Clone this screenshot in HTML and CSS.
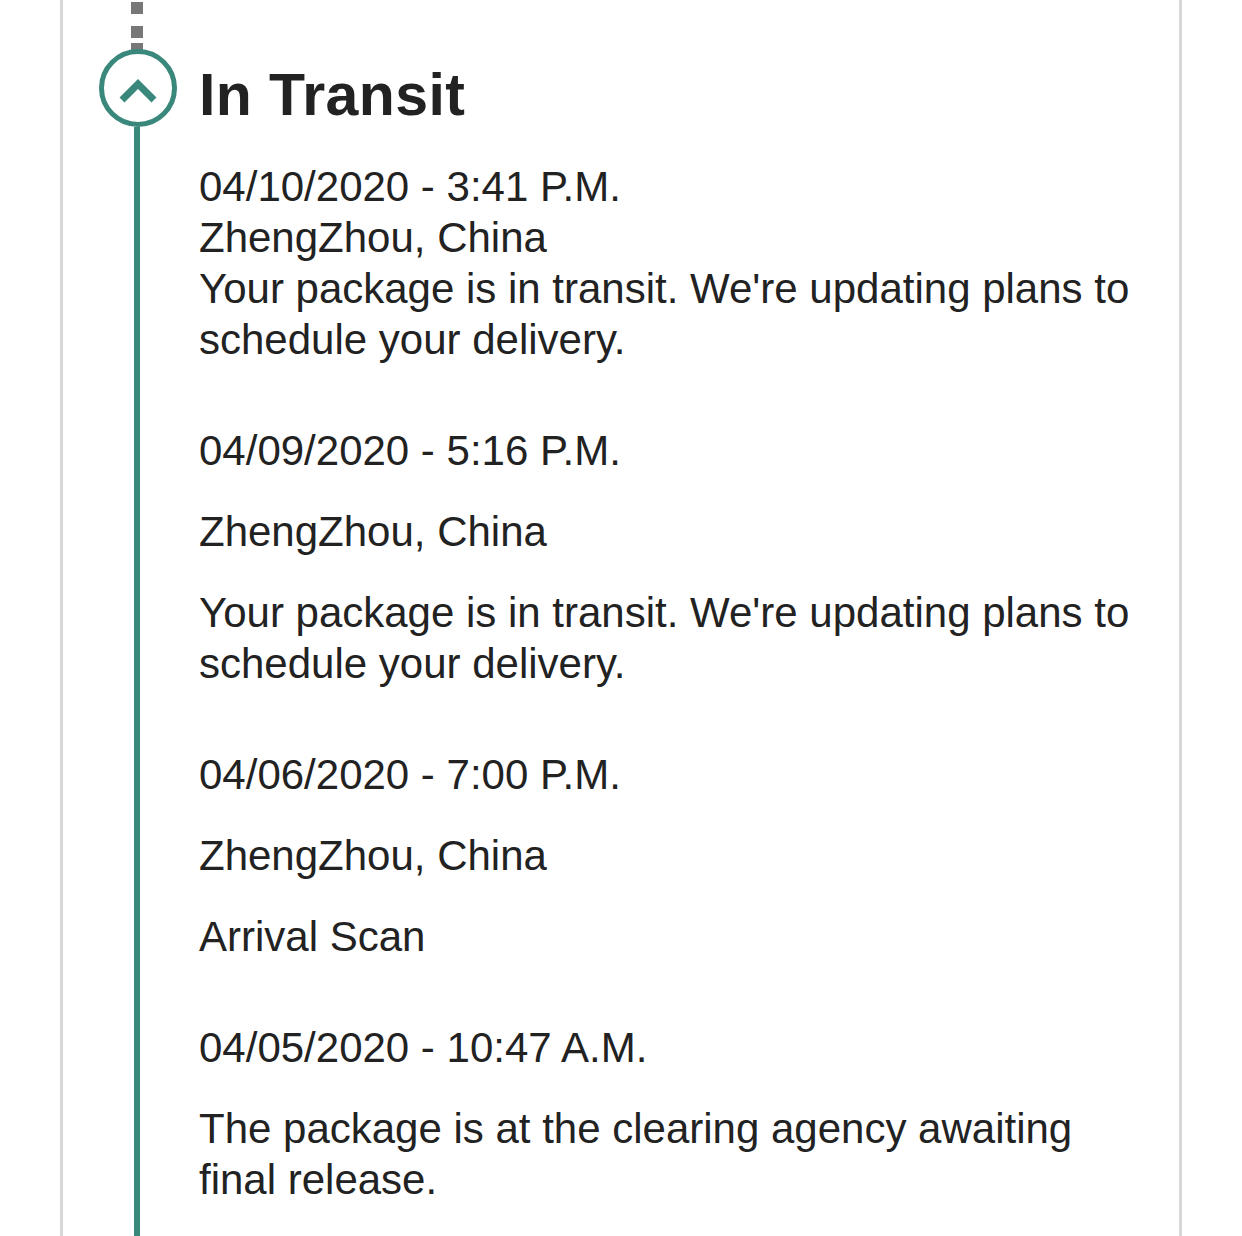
FILE: index.html
```html
<!DOCTYPE html>
<html lang="en">
<head>
    <meta charset="UTF-8">
    <meta name="viewport" content="width=device-width, initial-scale=1.0">
    <title>Tracking Details</title>
    <link rel="stylesheet" href="styles.css">
</head>
<body>
    <div class="tracker">
        <section class="status">
            <div class="rail">
                <span class="rail-dash"></span>
                <svg class="status-icon" width="78" height="78" viewBox="0 0 78 78">
                    <circle cx="39" cy="39" r="36.5" fill="#fff" stroke="#3a877b" stroke-width="5"/>
                    <polyline points="23,51 39,35 55,51" fill="none" stroke="#3a877b" stroke-width="7" stroke-linejoin="miter"/>
                </svg>
                <span class="rail-line"></span>
            </div>

            <div class="status-body">
                <h2 class="status-title">In Transit</h2>

                <div class="event-list">
                    <div class="event event-compact">
                        <p>04/10/2020 - 3:41 P.M.</p>
                        <p>ZhengZhou, China</p>
                        <p>Your package is in transit. We're updating plans to schedule your delivery.</p>
                    </div>
                    <div class="event">
                        <p>04/09/2020 - 5:16 P.M.</p>
                        <p>ZhengZhou, China</p>
                        <p>Your package is in transit. We're updating plans to schedule your delivery.</p>
                    </div>
                    <div class="event">
                        <p>04/06/2020 - 7:00 P.M.</p>
                        <p>ZhengZhou, China</p>
                        <p>Arrival Scan</p>
                    </div>
                    <div class="event">
                        <p>04/05/2020 - 10:47 A.M.</p>
                        <p>The package is at the clearing agency awaiting final release.</p>
                    </div>
                </div>
            </div>
        </section>
    </div>
</body>
</html>
```

FILE: styles.css
```css
* {
    margin: 0;
    padding: 0;
    box-sizing: border-box;
}

body {
    background: #fff;
    font-family: "Liberation Sans", Arial, sans-serif;
    color: #222;
}

.tracker {
    margin-left: 60px;
    width: 1122px;
    min-height: 1236px;
    border-left: 3px solid #d8d8d8;
    border-right: 3px solid #d8d8d8;
    padding: 0 39px 0 36px;
}

.status {
    display: flex;
    gap: 22px;
    min-height: 1236px;
}

.rail {
    width: 78px;
    flex-shrink: 0;
    display: flex;
    flex-direction: column;
    align-items: center;
}

.rail-dash {
    display: block;
    width: 12px;
    height: 50px;
    margin-left: -3px;
    background: linear-gradient(to bottom,
        transparent 0 2px, #777 2px 14px,
        transparent 14px 26px, #777 26px 38px,
        transparent 38px 43px, #777 43px 50px);
}

.status-icon {
    display: block;
    flex-shrink: 0;
    margin-top: -1px;
}

.rail-line {
    display: block;
    flex: 1;
    width: 6px;
    margin-left: -3px;
    background: #3a877b;
}

.status-body {
    flex: 1;
    padding-bottom: 40px;
}

.status-title {
    font-size: 59px;
    font-weight: bold;
    letter-spacing: 0.4px;
    line-height: 70px;
    margin-top: 60px;
    margin-bottom: 31px;
}

.event-list {
    display: flex;
    flex-direction: column;
    gap: 60px;
}

.event {
    display: flex;
    flex-direction: column;
    gap: 30px;
    font-size: 42px;
    line-height: 51px;
}

.event-compact {
    gap: 0;
}
```
